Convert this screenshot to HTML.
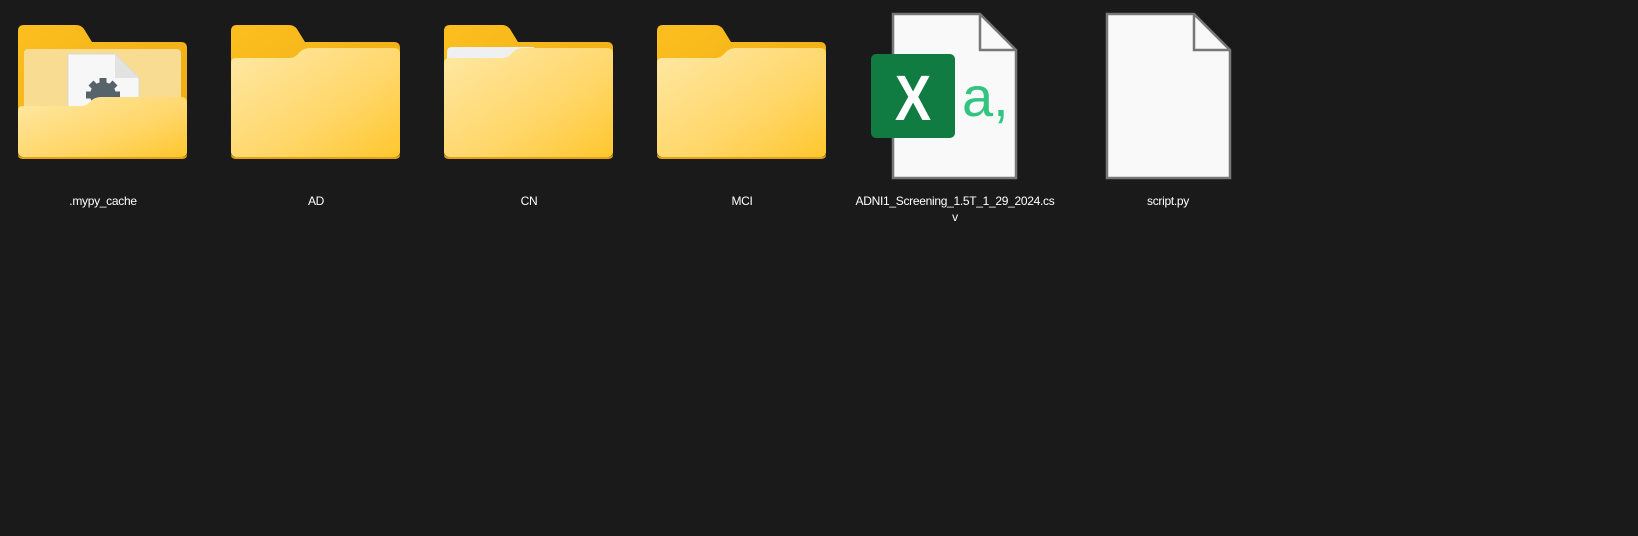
<!DOCTYPE html>
<html><head><meta charset="utf-8"><style>
html,body{margin:0;padding:0;background:#1a1a1a;width:1638px;height:536px;overflow:hidden}
.lbl{position:absolute;color:#fff;font-family:"Liberation Sans",sans-serif;font-size:12px;text-align:center;line-height:16px;letter-spacing:-0.3px}
</style></head><body>
<svg width="1638" height="536" style="position:absolute;left:0;top:0">
<defs>
<linearGradient id="bk" x1="0" y1="0" x2="1" y2="1"><stop offset="0" stop-color="#fdbf1f"/><stop offset="1" stop-color="#eaa812"/></linearGradient>
<linearGradient id="fr" x1="0" y1="0" x2="1" y2="1"><stop offset="0" stop-color="#ffe9a6"/><stop offset="0.6" stop-color="#ffd668"/><stop offset="1" stop-color="#ffc72e"/></linearGradient>
<g id="back"><path d="M0,6 Q0,0 6,0 L58,0 Q63,0 66,4 L74,17 L163,17 Q169,17 169,23 L169,126 Q169,132 163,132 L6,132 Q0,132 0,126 Z" fill="url(#bk)"/></g>
<g id="front"><path d="M0,38 Q0,33 5,33 L58,33 Q64,33 68,28 Q72,23 79,23 L163,23 Q169,23 169,29 L169,126 Q169,132 163,132 L6,132 Q0,132 0,126 Z" fill="url(#fr)"/><path d="M0,128 Q0,132 6,132 L163,132 Q169,132 169,128 L169,130 Q169,134 163,134 L6,134 Q0,134 0,130Z" fill="#e3a214"/></g>
</defs>
<!-- mypy -->
<g transform="translate(18,25)">
<use href="#back"/>
<rect x="6" y="24" width="157" height="90" rx="4" fill="#f8dc92"/>
<path d="M50,29 L97,29 L121,53 L121,100 L50,100Z" fill="#f7f7f7" stroke="#d8d8d8"/>
<path d="M97,29 L97,53 L121,53Z" fill="#e2e2e2"/>
<g transform="translate(85,70)" fill="#56636b"><circle r="13"/><g id="t"><rect x="-3.5" y="-17" width="7" height="7"/></g><use href="#t" transform="rotate(45)"/><use href="#t" transform="rotate(90)"/><use href="#t" transform="rotate(135)"/><use href="#t" transform="rotate(180)"/><use href="#t" transform="rotate(225)"/><use href="#t" transform="rotate(270)"/><use href="#t" transform="rotate(315)"/></g>
<path d="M0,86 Q0,81 5,81 L62,81 Q68,81 72,77 Q76,72 83,72 L163,72 Q169,72 169,78 L169,126 Q169,132 163,132 L6,132 Q0,132 0,126 Z" fill="url(#fr)"/>
<path d="M0,128 Q0,132 6,132 L163,132 Q169,132 169,128 L169,130 Q169,134 163,134 L6,134 Q0,134 0,130Z" fill="#e3a214"/>
</g>
<g transform="translate(231,25)"><use href="#back"/><use href="#front"/></g>
<g transform="translate(444,25)"><use href="#back"/><path d="M3,27 Q3,22 8,22 L90,22 L90,40 L3,40Z" fill="#eef0f2"/><use href="#front"/></g>
<g transform="translate(657,25)"><use href="#back"/><use href="#front"/></g>
<!-- csv -->
<path d="M893,14 L980,14 L1016,50 L1016,178 L893,178Z" fill="#f9f9f9" stroke="#777" stroke-width="2.5"/>
<path d="M980,14 L980,50 L1016,50" fill="none" stroke="#777" stroke-width="2.5"/>
<rect x="871" y="54" width="84" height="84" rx="5" fill="#107c41"/>
<text x="0" y="0" transform="translate(913,120) scale(0.85,1)" text-anchor="middle" font-family="Liberation Sans,sans-serif" font-weight="bold" font-size="64" fill="#fff">X</text>
<text x="962" y="116" font-family="Liberation Sans,sans-serif" font-size="56" fill="#33c481">a,</text>
<!-- script -->
<path d="M1107,14 L1194,14 L1230,50 L1230,178 L1107,178Z" fill="#f9f9f9" stroke="#777" stroke-width="2.5"/>
<path d="M1194,14 L1194,50 L1230,50" fill="none" stroke="#777" stroke-width="2.5"/>
</svg>
<div class="lbl" style="left:23px;top:193px;width:160px">.mypy_cache</div>
<div class="lbl" style="left:236px;top:193px;width:160px">AD</div>
<div class="lbl" style="left:449px;top:193px;width:160px">CN</div>
<div class="lbl" style="left:662px;top:193px;width:160px">MCI</div>
<div class="lbl" style="left:850px;top:193px;width:210px">ADNI1_Screening_1.5T_1_29_2024.cs<br>v</div>
<div class="lbl" style="left:1088px;top:193px;width:160px">script.py</div>
</body></html>
